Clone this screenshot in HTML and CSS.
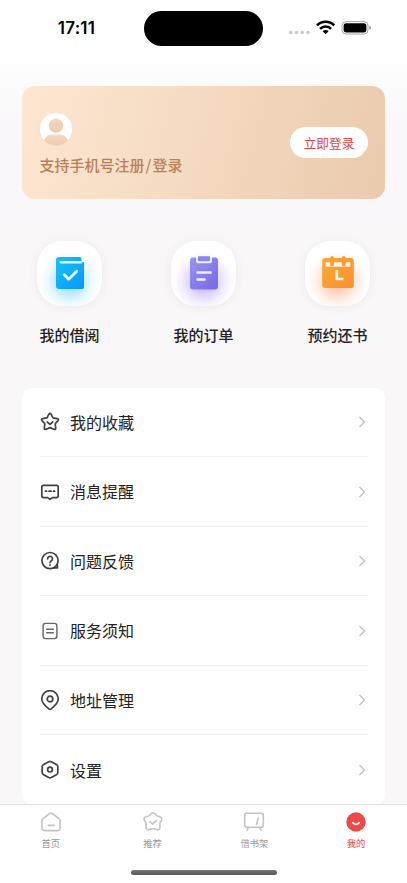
FILE: index.html
```html
<!DOCTYPE html>
<html lang="zh-CN">
<head>
<meta charset="utf-8">
<meta name="viewport" content="width=device-width, initial-scale=1">
<title>我的</title>
<link rel="stylesheet" href="styles.css">
</head>
<body>
<div class="screen">
  <header class="status">
    <span class="time">17:11</span>
    <span class="island"></span>
    <svg class="indicators" width="84" height="20" viewBox="0 0 84 20">
      <g fill="#c9c9c9"><circle cx="2.8" cy="14.5" r="1.8"/><circle cx="8.5" cy="14.5" r="1.8"/><circle cx="14.2" cy="14.5" r="1.8"/><circle cx="19.9" cy="14.5" r="1.8"/></g>
      <g fill="none" stroke="#000" stroke-width="2.6"><path d="M29 7.3a12.2 12.2 0 0 1 17.2 0"/><path d="M32.1 10.8a7.7 7.7 0 0 1 11 0"/></g>
      <path d="M34.6 13.3a4.2 4.2 0 0 1 6 0l-3 3z"/>
      <rect x="54" y="3.6" width="26" height="12.4" rx="4" fill="none" stroke="#a6a6a6"/>
      <rect x="55.6" y="5.2" width="22.8" height="9.2" rx="2.6"/>
      <path d="M81.3 7.8q1.8.6 1.8 2t-1.8 2z" fill="#999"/>
    </svg>
  </header>

  <main class="content">
    <section class="login">
      <div class="login-info">
        <svg class="avatar" width="34" height="34" viewBox="0 0 34 34">
          <defs>
            <linearGradient id="person" x1="0" y1="0" x2="0" y2="1"><stop offset="0" stop-color="#f5d8bf"/><stop offset="1" stop-color="#ebc9ab"/></linearGradient>
            <clipPath id="round"><circle cx="17" cy="17" r="16.5"/></clipPath>
          </defs>
          <circle cx="17" cy="17" r="16.7" fill="#fff" stroke="#efd3ba" stroke-width=".5"/>
          <g clip-path="url(#round)" fill="url(#person)"><circle cx="17" cy="13.6" r="7.2"/><path d="M4.600 31q1-8.500 8.400-8.500h8q7.400 0 8.400 8.500v4H4.600z"/></g>
        </svg>
        <p class="login-text">支持手机号注册<span class="slash">/</span>登录</p>
      </div>
      <button class="login-btn">立即登录</button>
    </section>

    <nav class="shortcuts">
      <a class="shortcut">
        <span class="tile tile-blue">
          <svg width="30" height="34" viewBox="0 0 30 34">
            <defs><linearGradient id="blue" x1="0" y1="0" x2="1" y2="1"><stop offset="0" stop-color="#18c2f3"/><stop offset="1" stop-color="#0697fb"/></linearGradient></defs>
            <path d="M4 1h20.5q2 0 2 2v3.2H29V31q0 2-2 2H4q-3 0-3-3V4q0-3 3-3z" fill="url(#blue)"/>
            <path d="M5.7 4.9h21v2.5h-21a1.25 1.25 0 0 1 0-2.5z" fill="#e2f7ff"/>
            <path d="m9.3 18.8 4.4 4.4 8-8" fill="none" stroke="#e9faff" stroke-width="2.8" stroke-linecap="round" stroke-linejoin="round"/>
          </svg>
        </span>
        <span class="shortcut-label">我的借阅</span>
      </a>
      <a class="shortcut">
        <span class="tile tile-purple">
          <svg width="30" height="36" viewBox="0 0 30 36">
            <defs><linearGradient id="purple" x1="0" y1="0" x2="1" y2="1"><stop offset="0" stop-color="#9896f0"/><stop offset="1" stop-color="#7868e6"/></linearGradient></defs>
            <rect x="1" y="2.500" width="28" height="32" rx="3" fill="url(#purple)"/>
            <path d="M7 1.500v4.200q0 2.600 2.600 2.600h10.800q2.600 0 2.600-2.600V1.500z" fill="#f2efff"/>
            <rect x="9" y="1.300" width="12" height="4.900" rx="1" fill="#8985eb"/>
            <path d="M8.600 17.500h13M8.600 24.500h7" stroke="#eeeaff" stroke-width="2.700" stroke-linecap="round"/>
          </svg>
        </span>
        <span class="shortcut-label">我的订单</span>
      </a>
      <a class="shortcut">
        <span class="tile tile-orange">
          <svg width="34" height="34" viewBox="0 0 34 34">
            <defs><linearGradient id="orange" x1="0" y1="0" x2="1" y2="1"><stop offset="0" stop-color="#fba936"/><stop offset="1" stop-color="#f7902e"/></linearGradient></defs>
            <rect x="1.200" y="2" width="31.600" height="30" rx="3" fill="url(#orange)"/>
            <path d="M4.700 6.200h24.600v4.500H4.700z" fill="#fff0dd"/>
            <path d="M11.100 1.900v6.600M22.800 1.900v6.600" stroke="#f99e36" stroke-width="3.700" stroke-linecap="round"/>
            <path d="M15.800 14v9h6.700" fill="none" stroke="#fff3e3" stroke-width="2.700"/>
          </svg>
        </span>
        <span class="shortcut-label">预约还书</span>
      </a>
    </nav>

    <ul class="menu">
      <li class="row">
        <svg class="row-icon" viewBox="0 0 20 20"><path d="M8.900 2.200q1.100-1.700 2.200 0l1.900 3.600 4.300.8q1.900.5.700 2l-2.800 3.100.5 4.300q.1 1.900-1.700 1.300l-4-1.700-4 1.700q-1.800.6-1.700-1.300l.5-4.300L2 8.600q-1.200-1.500.7-2l4.300-.8z"/><path d="m7.300 10 2.700 2.400 2.700-2.400"/></svg>
        <span class="row-label">我的收藏</span>
        <svg class="chevron" viewBox="0 0 8 12"><path d="m1.500 1 5 5-5 5"/></svg>
      </li>
      <li class="row">
        <svg class="row-icon" viewBox="0 0 20 20"><path d="M3.600 3.300h12.800q1.800 0 1.800 1.800v8.700q0 1.800-1.800 1.800h-4L10 17.300l-2.400-1.700h-4q-1.800 0-1.800-1.800V5.100q0-1.800 1.800-1.800z"/><path d="M5.400 9.200h1.200M9 9.200h2M13.400 9.200h1.200"/></svg>
        <span class="row-label">消息提醒</span>
        <svg class="chevron" viewBox="0 0 8 12"><path d="m1.500 1 5 5-5 5"/></svg>
      </li>
      <li class="row">
        <svg class="row-icon" viewBox="0 0 20 20"><circle cx="10" cy="9.600" r="8.100"/><path d="M13.800 16.900h3.600v-2.700"/><path d="M7.600 7.800a2.450 2.450 0 1 1 3.800 2q-1.400.8-1.400 1.800M10 13.900v.3"/></svg>
        <span class="row-label">问题反馈</span>
        <svg class="chevron" viewBox="0 0 8 12"><path d="m1.500 1 5 5-5 5"/></svg>
      </li>
      <li class="row">
        <svg class="row-icon row-icon-light" viewBox="0 0 20 20"><rect x="3.100" y="2.400" width="13.800" height="15.200" rx="2.500"/><path d="M6.700 8.200h6.600M6.700 11.700h6.600"/></svg>
        <span class="row-label">服务须知</span>
        <svg class="chevron" viewBox="0 0 8 12"><path d="m1.500 1 5 5-5 5"/></svg>
      </li>
      <li class="row">
        <svg class="row-icon" viewBox="0 0 20 20"><path d="M8.900 18.900C5 15.800 1.700 12.900 1.700 9a8.300 8.300 0 0 1 16.600 0c0 3.900-3.300 6.800-7.200 9.900q-1.100.8-2.200 0z"/><circle cx="10" cy="9" r="2.800"/></svg>
        <span class="row-label">地址管理</span>
        <svg class="chevron" viewBox="0 0 8 12"><path d="m1.500 1 5 5-5 5"/></svg>
      </li>
      <li class="row">
        <svg class="row-icon" viewBox="0 0 20 20"><path d="M8.800 1.700q1.200-.6 2.400 0l5.200 2.800q1.400.7 1.400 2.300v5.600q0 1.600-1.400 2.300l-5.200 2.800q-1.200.6-2.400 0l-5.200-2.800q-1.400-.7-1.400-2.300V6.800q0-1.600 1.400-2.300z"/><circle cx="10" cy="9.600" r="2.400"/></svg>
        <span class="row-label">设置</span>
        <svg class="chevron" viewBox="0 0 8 12"><path d="m1.500 1 5 5-5 5"/></svg>
      </li>
    </ul>
  </main>

  <footer class="tabbar">
    <nav class="tabs">
      <a class="tab">
        <svg viewBox="0 0 22 22"><path d="M3 7.700 9.700 2.500q1.300-1 2.600 0L19 7.700q1.100.8 1.100 2v7.400q0 2.500-2.500 2.500H4.400q-2.500 0-2.500-2.500V9.700q0-1.200 1.100-2zM8.400 14.400h5.800"/></svg>
        <span>首页</span>
      </a>
      <a class="tab">
        <svg viewBox="0 0 22 22"><path d="M9.100 2.700q1.900-2 3.800 0l1.300 1.600q.7.800 1.800 1l2 .5q2.700.8 1.700 3.400l-1.400 2.300q-.5.900-.4 2l.1 2.900q-.3 2.800-3 2.200-1.900-.8-4-.8t-4 .8q-2.700.6-3-2.200l.1-2.900q.1-1.100-.4-2L2.300 9.200Q1.300 6.600 4 5.800l2-.5q1.100-.2 1.800-1zM8 10.500l2.700 2.600 3.700-3.700"/></svg>
        <span>推荐</span>
      </a>
      <a class="tab">
        <svg viewBox="0 0 22 22"><rect x="1.700" y="2.200" width="18.600" height="14" rx="2"/><path d="m15.200 7.300-1.700 6.200M5.300 16.500l-1.300 3M16.700 16.500l1.300 3"/></svg>
        <span>借书架</span>
      </a>
      <a class="tab tab-active">
        <svg viewBox="0 0 22 22"><circle cx="11" cy="11" r="9.700"/><path class="smile" d="M7.700 11.600q3.300 3.500 6.600 0"/></svg>
        <span>我的</span>
      </a>
    </nav>
    <div class="home-indicator"></div>
  </footer>
</div>
</body>
</html>
```
FILE: styles.css
```css
* { box-sizing: border-box; }
body, p, ul { margin: 0; padding: 0; }
body {
  font-family: "Noto Sans CJK SC", sans-serif;
  color: #222;
  overflow: hidden;
}
svg { display: block; flex: none; }
.screen {
  display: flex;
  flex-direction: column;
  height: 883px;
  background: linear-gradient(#fff 0, #fff 50px, #f9f7f9 130px, #f9f7f8 100%);
}
.status {
  flex: none;
  display: grid;
  grid-template-columns: 144px 119px 1fr;
  align-items: center;
  height: 56px;
}
.time {
  padding-left: 9px;
  text-align: center;
  font: 600 17px/20px Inter, sans-serif;
  letter-spacing: .3px;
  color: #000;
}
.island {
  height: 35px;
  border-radius: 18px;
  background: #000;
}
.indicators { margin: -1px 0 0 25px; }
.content {
  flex: 1;
  min-height: 0;
  overflow: hidden;
  padding: 30px 22px 0;
}
.login {
  display: flex;
  align-items: center;
  justify-content: space-between;
  height: 113px;
  padding: 0 17px;
  border-radius: 13px;
  background: linear-gradient(105deg, #fee6d2 0%, #f5dbc2 45%, #eacaad 100%);
}
.login-info { padding-top: 3px; }
.login-text {
  margin: 8px 0 0 .5px;
  font-size: 15px;
  line-height: 22px;
  font-weight: 500;
  color: #b98058;
}
.slash { margin: 0 1px; }
.login-btn {
  width: 78px;
  height: 31px;
  padding: 0;
  border: 0;
  border-radius: 16px;
  background: #fff;
  color: #e64545;
  font: 400 12.800px/29px "Noto Sans CJK SC", sans-serif;
}
.shortcuts {
  display: flex;
  justify-content: space-between;
  padding: 41.500px 15px 0;
}
.shortcut {
  display: flex;
  flex-direction: column;
  align-items: center;
  width: 65px;
}
.tile {
  display: flex;
  align-items: center;
  justify-content: center;
  width: 65px;
  height: 65px;
  border-radius: 25px;
  background-color: #fff;
  box-shadow: 0 1px 10px rgba(80, 60, 80, .07);
}
.tile-blue { background-image: radial-gradient(circle at 50% 62%, #83daff 0, #c2ecff 26%, #eaf9ff 42%, #fff 58%); }
.tile-purple { background-image: radial-gradient(circle at 50% 62%, #b9a4ff 0, #ddd3ff 26%, #f3eeff 42%, #fff 58%); }
.tile-orange { background-image: radial-gradient(circle at 50% 62%, #ffb998 0, #ffdccb 26%, #fff2ec 42%, #fff 58%); }
.shortcut-label {
  margin-top: 18.500px;
  font-size: 15px;
  line-height: 22px;
  font-weight: 500;
  white-space: nowrap;
}
.menu {
  margin-top: 41.500px;
  padding: 0 17px 0 18px;
  border-radius: 10px;
  background: #fff;
  list-style: none;
}
.row {
  display: flex;
  align-items: center;
  height: 69.500px;
  padding-top: 1px;
  border-bottom: 1px solid #f1f1f1;
}
.row:last-child { border-bottom: 0; }
.row-icon {
  width: 20px;
  height: 20px;
  fill: none;
  stroke: #414141;
  stroke-width: 1.700;
  stroke-linecap: round;
  stroke-linejoin: round;
}
.row-icon-light { stroke: #666; stroke-width: 1.400; }
.row-label {
  flex: 1;
  margin-top: -1px;
  padding-left: 10px;
  font-size: 16px;
  line-height: 24px;
}
.chevron {
  width: 8px;
  height: 12px;
  margin-right: 2px;
  fill: none;
  stroke: #c2c2c2;
  stroke-width: 1.400;
}
.tabbar {
  flex: none;
  display: flex;
  flex-direction: column;
  align-items: center;
  justify-content: space-between;
  height: 79.500px;
  padding-bottom: 8px;
  border-top: 1px solid #e6e3e5;
  background: #fff;
}
.tabs {
  display: flex;
  width: 100%;
}
.tab {
  flex: 1;
  display: flex;
  flex-direction: column;
  align-items: center;
  padding-top: 6.500px;
  font-size: 9.300px;
  line-height: 14px;
  color: #999;
}
.tab svg {
  width: 22px;
  height: 22px;
  margin-bottom: 3px;
  fill: none;
  stroke: #c4c4c4;
  stroke-width: 1.600;
  stroke-linecap: round;
  stroke-linejoin: round;
}
.tab-active { color: #ee4545; }
.tab-active circle { fill: #f04747; stroke: none; }
.tab-active .smile { stroke: #fff; }
.home-indicator {
  width: 146px;
  height: 5px;
  border-radius: 3px;
  background: linear-gradient(#777, #565858);
}
```
